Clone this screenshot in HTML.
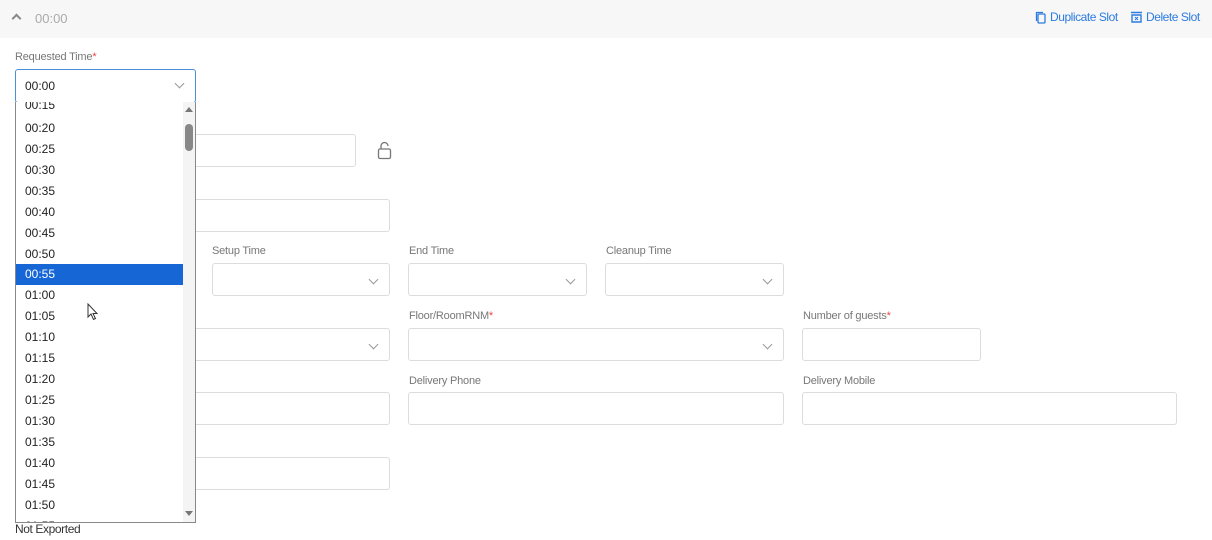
<!DOCTYPE html>
<html><head><style>
*{box-sizing:border-box;margin:0;padding:0}
body{width:1212px;height:540px;background:#fff;font-family:"Liberation Sans",sans-serif;position:relative;overflow:hidden;color:#333}
.a{position:absolute}
.hdr{left:0;top:0;width:1212px;height:38px;background:#f7f7f7}
.lbl{font-size:11px;color:#777;letter-spacing:-0.2px}
.lbl b{color:#e44;font-weight:normal}
.f{border:1px solid #dcdcdc;border-radius:3px;height:33px;background:#fff}
.chev{position:absolute;right:12px;top:12px;width:7px;height:7px;border-right:1px solid #999;border-bottom:1px solid #999;transform:rotate(45deg)}
.dd{left:15px;top:102px;width:181px;height:421px;border:1px solid #888;border-top:none;background:#fff;overflow:hidden}
.it{position:absolute;left:0;width:167px;height:21px;font-size:12px;color:#222;padding-left:9px;line-height:21px}
.sel{background:#1666d6;color:#fff}
.link{color:#2d7be0;font-size:12px;letter-spacing:-0.45px}
</style></head><body>
<div class="a hdr"></div>
<div class="a" style="left:13px;top:15px;width:7px;height:7px;border-left:2px solid #888;border-top:2px solid #888;transform:rotate(45deg)"></div>
<div class="a" style="left:35px;top:11px;font-size:13px;color:#aaa">00:00</div>
<svg class="a" style="left:1035px;top:11px" width="12" height="13" viewBox="0 0 12 13"><rect x="3" y="3" width="7" height="9" rx="1" fill="none" stroke="#2d7be0" stroke-width="1.3"/><path d="M1.5 10V1.5H8" fill="none" stroke="#2d7be0" stroke-width="1.3"/></svg>
<div class="a link" style="left:1050px;top:10px">Duplicate Slot</div>
<svg class="a" style="left:1130px;top:11px" width="13" height="12" viewBox="0 0 13 12"><path d="M1 1.5H12M2 4H11V11H2Z" fill="none" stroke="#2d7be0" stroke-width="1.4"/><path d="M5 6l3 3M8 6l-3 3" stroke="#2d7be0"/></svg>
<div class="a link" style="left:1146px;top:10px">Delete Slot</div>

<div class="a lbl" style="left:15px;top:51px">Requested Time<b>*</b></div>
<div class="a f" style="left:15px;top:69px;width:181px;height:34px;border-color:#4a90d9"><div style="position:absolute;left:9px;top:9px;font-size:12px;color:#222">00:00</div><div class="chev" style="top:10px"></div></div>

<div class="a f" style="left:15px;top:134px;width:341px"></div>
<svg class="a" style="left:377px;top:141px" width="16" height="19" viewBox="0 0 16 19"><rect x="1.5" y="8" width="12" height="9.5" rx="1.5" fill="none" stroke="#777" stroke-width="1.3"/><path d="M4 8V5a3.5 3.5 0 0 1 7 0" fill="none" stroke="#777" stroke-width="1.3"/></svg>
<div class="a f" style="left:15px;top:199px;width:375px"></div>

<div class="a lbl" style="left:212px;top:245px">Setup Time</div>
<div class="a lbl" style="left:409px;top:245px">End Time</div>
<div class="a lbl" style="left:606px;top:245px">Cleanup Time</div>
<div class="a f" style="left:15px;top:263px;width:180px"></div>
<div class="a f" style="left:212px;top:263px;width:178px"><div class="chev"></div></div>
<div class="a f" style="left:408px;top:263px;width:179px"><div class="chev"></div></div>
<div class="a f" style="left:605px;top:263px;width:179px"><div class="chev"></div></div>

<div class="a lbl" style="left:409px;top:310px">Floor/RoomRNM<b>*</b></div>
<div class="a lbl" style="left:803px;top:310px">Number of guests<b>*</b></div>
<div class="a f" style="left:15px;top:328px;width:375px"><div class="chev"></div></div>
<div class="a f" style="left:408px;top:328px;width:376px"><div class="chev"></div></div>
<div class="a f" style="left:802px;top:328px;width:179px"></div>

<div class="a lbl" style="left:409px;top:375px">Delivery Phone</div>
<div class="a lbl" style="left:803px;top:375px">Delivery Mobile</div>
<div class="a f" style="left:15px;top:392px;width:375px"></div>
<div class="a f" style="left:408px;top:392px;width:376px"></div>
<div class="a f" style="left:802px;top:392px;width:375px"></div>

<div class="a f" style="left:15px;top:457px;width:375px"></div>
<div class="a" style="left:15px;top:522px;font-size:12px;color:#333;letter-spacing:-0.4px">Not Exported</div>

<div class="a dd">
<div class="it" style="top:-7px">00:15</div>
<div class="it" style="top:15.5px">00:20</div>
<div class="it" style="top:36.5px">00:25</div>
<div class="it" style="top:57.5px">00:30</div>
<div class="it" style="top:78.5px">00:35</div>
<div class="it" style="top:99.5px">00:40</div>
<div class="it" style="top:120.5px">00:45</div>
<div class="it" style="top:141.5px">00:50</div>
<div class="it sel" style="top:162px">00:55</div>
<div class="it" style="top:183px">01:00</div>
<div class="it" style="top:204px">01:05</div>
<div class="it" style="top:225px">01:10</div>
<div class="it" style="top:246px">01:15</div>
<div class="it" style="top:267px">01:20</div>
<div class="it" style="top:288px">01:25</div>
<div class="it" style="top:309px">01:30</div>
<div class="it" style="top:330px">01:35</div>
<div class="it" style="top:351px">01:40</div>
<div class="it" style="top:372px">01:45</div>
<div class="it" style="top:393px">01:50</div>
<div class="it" style="top:414px">01:55</div>
<div style="position:absolute;left:167px;top:0;width:13px;height:421px;background:#f4f4f4"></div>
<div style="position:absolute;left:169px;top:5px;width:0;height:0;border-left:4px solid transparent;border-right:4px solid transparent;border-bottom:5px solid #777"></div>
<div style="position:absolute;left:169px;top:22px;width:8px;height:27px;border-radius:4px;background:#888"></div>
<div style="position:absolute;left:169px;top:409px;width:0;height:0;border-left:4px solid transparent;border-right:4px solid transparent;border-top:5px solid #777"></div>
</div>
<svg class="a" style="left:87px;top:303px" width="12" height="18" viewBox="0 0 12 18"><path d="M1 1V14L4 11L6.5 16.5L8.5 15.5L6 10.5H10Z" fill="#fff" stroke="#333" stroke-width="1"/></svg>
</body></html>
